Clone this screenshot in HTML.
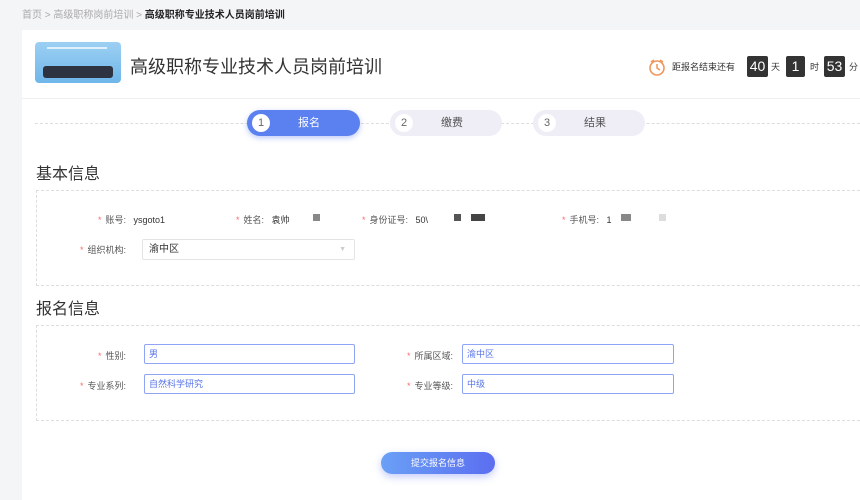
<!DOCTYPE html><html><head><meta charset="utf-8"><style>
*{margin:0;padding:0;box-sizing:border-box}
body{width:860px;height:490px;overflow:hidden;background:#f4f5f7;font-family:"Liberation Sans","Noto Sans CJK SC",sans-serif;position:relative;color:#333}
.a{position:absolute}
.card{left:22px;top:30px;width:838px;height:470px;background:#fff}
.bc{left:22px;top:6px;font-size:10px;color:#aaa}
.bc b{color:#222}
.img{left:35px;top:42px;width:86px;height:41px;border-radius:4px;background:linear-gradient(#9cd0f3,#6fb6ea);overflow:hidden}
.title{left:130px;top:53px;font-size:18px;color:#333}
.tm{top:60px;font-size:9px;color:#333}
.box{top:56px;height:21px;background:#333;color:#fff;font-size:14px;line-height:21px;text-align:center;border-radius:2px}
.step{top:110px;height:26px;border-radius:13px;background:#efeef6;font-size:11px;color:#555;line-height:26px}
.step i{position:absolute;left:5px;top:4px;width:18px;height:18px;border-radius:9px;background:#fff;font-style:normal;text-align:center;line-height:18px;font-size:11px;color:#666}
.h{left:36px;font-size:16px;color:#333}
.dbox{left:36px;width:824px;border:1px dashed #ddd;border-right:none}
.lb{font-size:9px;color:#555}
.lb s{text-decoration:none;color:#f56c6c;margin-right:4px}
.in{height:20px;border:1px solid #8fa4f5;border-radius:2px;font-size:9px;color:#5873e8;padding:0 4px;line-height:18px;background:#fff}
</style></head><body>
<div class="a bc">首页 &gt; 高级职称岗前培训 &gt; <b>高级职称专业技术人员岗前培训</b></div>
<div class="a card"></div>
<div class="a img"><div class="a" style="left:8px;top:24px;width:70px;height:12px;background:#2d3340;border-radius:3px"></div><div class="a" style="left:12px;top:5px;width:60px;height:2px;background:#fff;opacity:.7"></div></div>
<div class="a title">高级职称专业技术人员岗前培训</div>
<svg class="a" style="left:647px;top:57px" width="20" height="20" viewBox="0 0 20 20"><circle cx="10" cy="11" r="7" fill="none" stroke="#f0965a" stroke-width="1.6"/><path d="M10 7v4l3 2M4 5l3-2M16 5l-3-2" stroke="#f0965a" stroke-width="1.5" fill="none"/></svg>
<div class="a tm" style="left:672px">距报名结束还有</div>
<div class="a box" style="left:747px;width:21px">40</div><div class="a tm" style="left:771px">天</div>
<div class="a box" style="left:786px;width:19px">1</div><div class="a tm" style="left:810px">时</div>
<div class="a box" style="left:824px;width:21px">53</div><div class="a tm" style="left:849px">分</div>
<div class="a" style="left:22px;top:98px;width:838px;border-top:1px solid #f0f0f0"></div>
<div class="a" style="left:35px;top:123px;width:825px;border-top:1px dashed #ddd"></div>
<div class="a step" style="left:247px;width:113px;background:#5b80f0;color:#fff;box-shadow:0 2px 6px rgba(90,120,240,.4)"><i>1</i><span style="position:absolute;left:51px">报名</span></div>
<div class="a step" style="left:390px;width:112px"><i>2</i><span style="position:absolute;left:51px">缴费</span></div>
<div class="a step" style="left:533px;width:112px"><i>3</i><span style="position:absolute;left:51px">结果</span></div>
<div class="a h" style="top:160px">基本信息</div>
<div class="a dbox" style="top:190px;height:96px"></div>
<div class="a lb" style="left:98px;top:213px"><s>*</s>账号:&nbsp;&nbsp; <span style="color:#333">ysgoto1</span></div>
<div class="a lb" style="left:236px;top:213px"><s>*</s>姓名:&nbsp;&nbsp; <span style="color:#333">袁帅</span></div>
<div class="a" style="left:313px;top:214px;width:7px;height:7px;background:#888"></div>
<div class="a lb" style="left:362px;top:213px"><s>*</s>身份证号:&nbsp;&nbsp; <span style="color:#333">50\</span></div>
<div class="a" style="left:454px;top:214px;width:7px;height:7px;background:#555"></div>
<div class="a" style="left:471px;top:214px;width:14px;height:7px;background:#444"></div>
<div class="a lb" style="left:562px;top:213px"><s>*</s>手机号:&nbsp;&nbsp; <span style="color:#333">1</span></div>
<div class="a" style="left:621px;top:214px;width:10px;height:7px;background:#888"></div>
<div class="a" style="left:659px;top:214px;width:7px;height:7px;background:#ddd"></div>
<div class="a lb" style="left:80px;top:243px"><s>*</s>组织机构:</div>
<div class="a" style="left:142px;top:239px;width:213px;height:21px;border:1px solid #e4e4e4;border-radius:2px;font-size:10px;line-height:19px;padding:0 6px;color:#333">渝中区<span style="position:absolute;right:8px;top:0;color:#ccc;font-size:7px">▼</span></div>
<div class="a h" style="top:295px">报名信息</div>
<div class="a dbox" style="top:325px;height:96px"></div>
<div class="a lb" style="left:98px;top:349px"><s>*</s>性别:</div>
<div class="a in" style="left:144px;top:344px;width:211px">男</div>
<div class="a lb" style="left:80px;top:379px"><s>*</s>专业系列:</div>
<div class="a in" style="left:144px;top:374px;width:211px">自然科学研究</div>
<div class="a lb" style="left:313px;top:349px;width:140px;text-align:right"><s>*</s>所属区域:</div>
<div class="a in" style="left:462px;top:344px;width:212px">渝中区</div>
<div class="a lb" style="left:313px;top:379px;width:140px;text-align:right"><s>*</s>专业等级:</div>
<div class="a in" style="left:462px;top:374px;width:212px">中级</div>
<div class="a" style="left:381px;top:452px;width:114px;height:22px;border-radius:11px;background:linear-gradient(90deg,#6aa0f6,#5b6ef0);color:#fff;font-size:9px;text-align:center;line-height:22px;box-shadow:0 3px 8px rgba(90,110,240,.35)">提交报名信息</div>
</body></html>
